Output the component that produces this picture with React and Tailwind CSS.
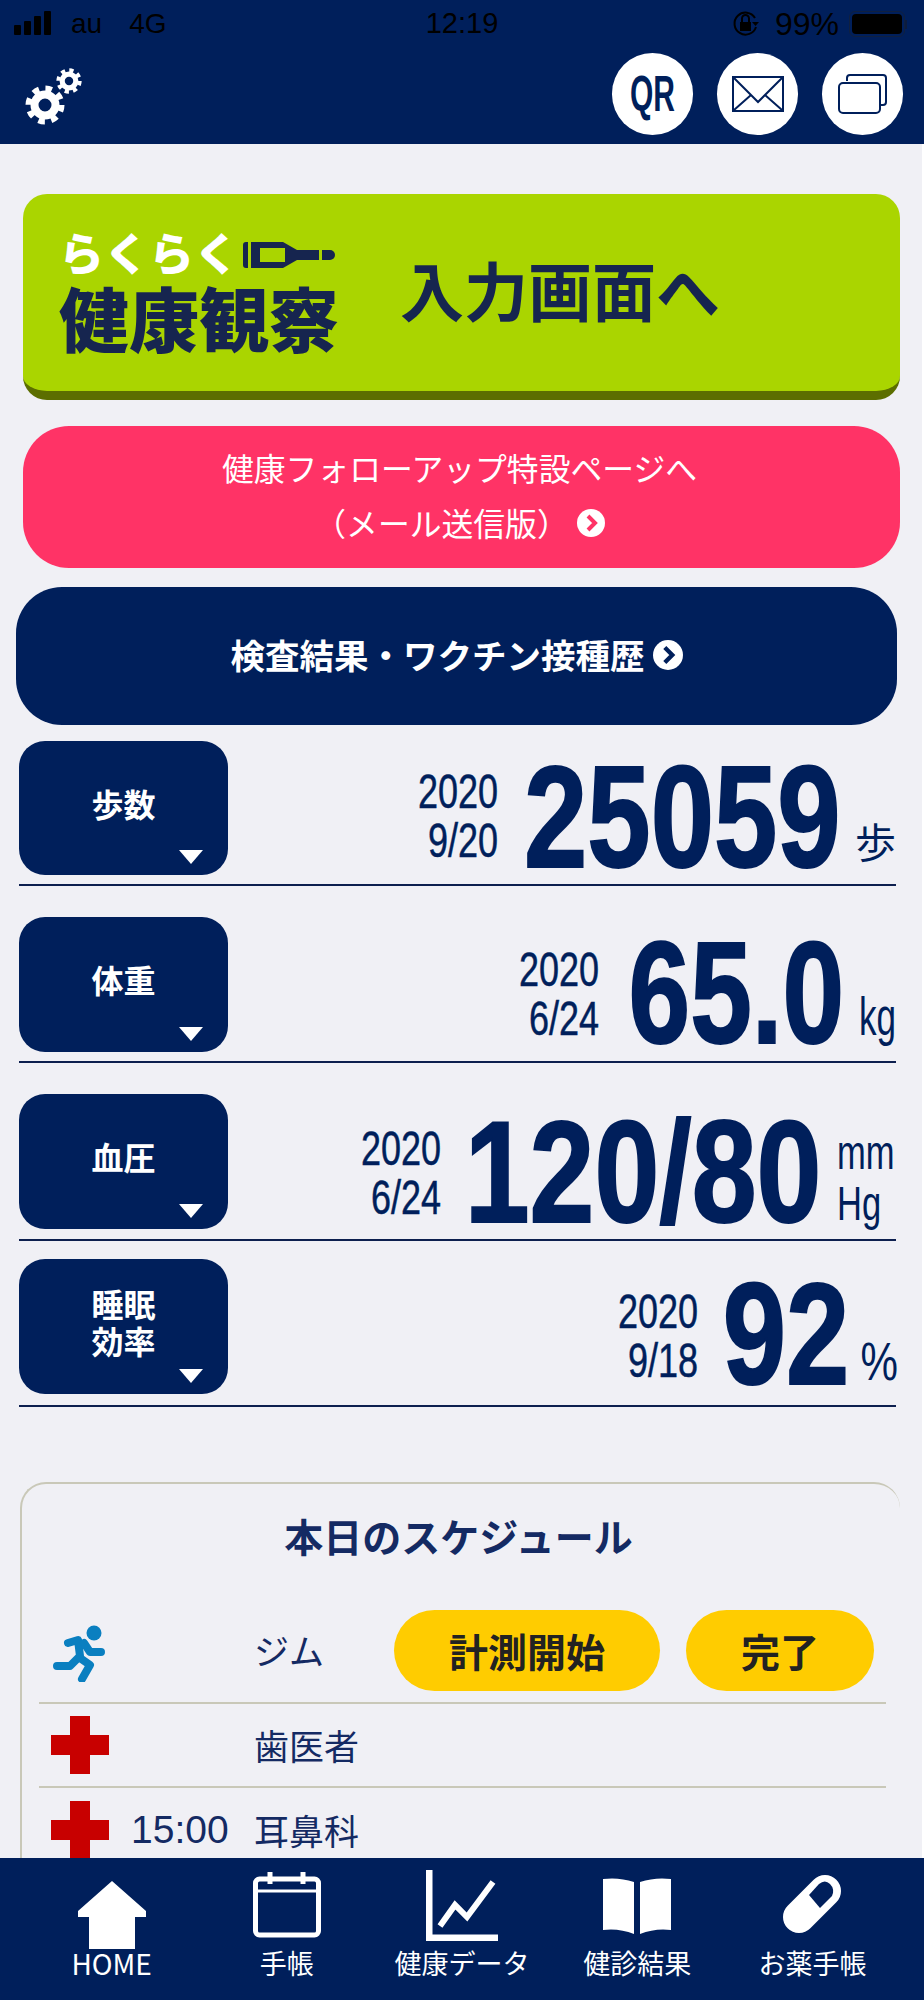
import React from "react";

const JP = "font-['Noto_Sans_CJK_JP','Noto_Sans',sans-serif]";
const NUM = "font-['Liberation_Sans',sans-serif]";

function Gear({ size, cls }) {
  return (
    <svg width={size} height={size} viewBox="0 0 40 40" className={cls}>
      <circle cx="20" cy="20" r="16.500" fill="none" stroke="#fff" strokeWidth="6" strokeDasharray="6.500 6.450" />
      <circle cx="20" cy="20" r="10.500" fill="none" stroke="#fff" strokeWidth="8" />
    </svg>
  );
}

function Label({ children, h }) {
  return (
    <div className={`relative w-[209px] ${h} shrink-0 rounded-[26px] bg-[#001f5b] flex items-center justify-center text-white text-[32px] leading-[37px] font-bold text-center pb-[10px] ${JP}`}>
      <div>{children}</div>
      <div className="absolute right-[25px] bottom-[11px] w-0 h-0 border-l-[12px] border-r-[12px] border-t-[14px] border-l-transparent border-r-transparent border-t-white" />
    </div>
  );
}

function DateBox({ d, w, mt }) {
  return (
    <div className={`${w} ${mt} shrink-0 text-right ${NUM} text-[48px] leading-[49px] text-[#001f5b] [-webkit-text-stroke:0.5px_#001f5b]`}>
      <div className="whitespace-nowrap origin-right scale-x-[0.75]">2020</div>
      <div className="whitespace-nowrap origin-right scale-x-[0.75]">{d}</div>
    </div>
  );
}

function Row({ label, date, dateMt, value, valW, scaleCls, unit, mt, pt, pb, h }) {
  return (
    <div className={`${mt} ${pb} ml-[19px] mr-[26px] flex items-start border-b-2 border-[#0d1f4f]`}>
      <Label h={h}>{label}</Label>
      <div className="flex-1" />
      <DateBox d={date} w="w-[120px]" mt={dateMt} />
      <div className={`${valW} ${pt} h-[134px] shrink-0 flex justify-end items-center overflow-visible`}>
        <div className={`${NUM} whitespace-nowrap text-[144px] leading-[134px] font-bold text-[#001f5b] origin-right [-webkit-text-stroke:2px_#001f5b] ${scaleCls}`}>{value}</div>
      </div>
      {unit}
    </div>
  );
}

function ScheduleRow({ icon, time, name, border = true }) {
  return (
    <div className={`h-[84px] flex items-center ${border ? "border-b-2 border-[#c9c8b8]" : ""}`}>
      <div className="w-[92px] shrink-0 flex justify-center pr-[10px]">{icon}</div>
      <div className={`w-[123px] shrink-0 text-[#142a63] text-[39px] leading-[44px] whitespace-nowrap ${NUM}`}>{time}</div>
      <div className={`w-[140px] shrink-0 text-[#142a63] text-[35px] ${JP}`}>{name}</div>
    </div>
  );
}

function Cross() {
  return (
    <svg width="58" height="58" viewBox="0 0 58 58">
      <path d="M19 0h20v19h19v20H39v19H19V39H0V19h19z" fill="#c80000" />
    </svg>
  );
}

function NavItem({ icon, label, cls = "text-[27px]" }) {
  return (
    <div className="flex flex-col items-center">
      <div className="h-[92px] w-full flex items-end justify-center">{icon}</div>
      <div className={`text-white leading-[30px] whitespace-nowrap mt-[-2px] ${JP} ${cls}`}>{label}</div>
    </div>
  );
}

export default function App() {
  return (
    <div className={`w-[924px] h-[2000px] overflow-hidden flex flex-col bg-white ${JP}`}>
      {/* header */}
      <div className="h-[144px] shrink-0 bg-[#001f5b] relative">
        <div className={`h-[48px] flex items-center px-[14px] text-black text-[28px] ${NUM} relative`}>
          <div className="flex items-end gap-[3px] h-[24px] mt-[-2px]">
            <div className="w-[7px] h-[10px] bg-black rounded-[1px]" />
            <div className="w-[7px] h-[14px] bg-black rounded-[1px]" />
            <div className="w-[7px] h-[19px] bg-black rounded-[1px]" />
            <div className="w-[7px] h-[24px] bg-black rounded-[1px]" />
          </div>
          <span className="ml-[20px]">au</span>
          <span className="ml-[27px]">4G</span>
          <span className="absolute left-0 right-0 text-center pointer-events-none text-[29px]">12:19</span>
          <div className="ml-auto flex items-center">
            <svg width="30" height="30" viewBox="0 0 30 30" fill="none" className="mr-[14px]">
              <path d="M24 9a11 11 0 1 0 1 9" stroke="#000" strokeWidth="2" />
              <path d="M21 13h7l-3.500 4z" fill="#000" />
              <rect x="9" y="13" width="11" height="9" fill="#000" />
              <path d="M11 13V9.500a3.500 3.500 0 0 1 7 0V13" stroke="#000" strokeWidth="2" />
            </svg>
            <span className="text-[32px]">99%</span>
            <div className="ml-[10px] w-[56px] h-[26px] rounded-[6px] border border-[#10203f] p-[2px]">
              <div className="w-full h-full rounded-[4px] bg-black" />
            </div>
            <div className="w-[2px] h-[9px] bg-[#0c1c3e] mr-[3px]" />
          </div>
        </div>
        <div className="flex items-start pr-[21px] mt-[5px]">
          <div className="relative w-[60px] h-[60px] ml-[25px] mt-[14px]">
            <Gear size={40} cls="absolute left-0 top-[18px]" />
            <Gear size={26} cls="absolute left-[31px] top-[1px]" />
          </div>
          <div className="ml-auto flex gap-[24px]">
            <div className="w-[81px] h-[82px] rounded-full bg-white flex items-center justify-center">
              <span className={`${NUM} font-bold text-[#001f5b] text-[50px] scale-x-[0.6]`}>QR</span>
            </div>
            <div className="w-[81px] h-[82px] rounded-full bg-white flex items-center justify-center">
              <svg width="52" height="36" viewBox="0 0 52 36" fill="none" stroke="#001f5b" strokeWidth="2">
                <rect x="1" y="1" width="50" height="34" />
                <path d="M2 2l24 24L50 2M2 34l17-15M50 34L33 19" />
              </svg>
            </div>
            <div className="w-[81px] h-[82px] rounded-full bg-white flex items-center justify-center">
              <svg width="50" height="40" viewBox="0 0 50 40" fill="none" stroke="#001f5b" strokeWidth="2">
                <path d="M9 7V4a3 3 0 0 1 3-3h33a3 3 0 0 1 3 3v24a3 3 0 0 1-3 3h-3" />
                <rect x="1" y="9" width="41" height="30" rx="4" />
              </svg>
            </div>
          </div>
        </div>
      </div>

      {/* content */}
      <div className="flex-1 min-h-0 overflow-hidden bg-[#f0f0f5] mr-[2px] pt-[50px]">
        <div className="ml-[23px] mr-[22px] h-[206px] rounded-[24px] bg-[#aad500] border-b-[9px] border-[#5c6e00] flex items-center">
          <div className="ml-[36px] w-[284px] mt-[-4px]">
            <div className="flex items-center h-[48px]">
              <span className="text-white text-[45px] leading-[48px] font-black whitespace-nowrap">らくらく</span>
              <svg width="92" height="26" viewBox="0 0 92 26" className="ml-[4px] mt-[6px] shrink-0">
                <path d="M3 0h2v26H3a3 3 0 0 1-3-3V3a3 3 0 0 1 3-3zM8 0h32l14 8h22v10H54l-14 8H8z" fill="#16254f" />
                <rect x="17" y="6" width="25" height="14" fill="#aad500" />
                <path d="M79 8h8a5 5 0 0 1 0 10h-8z" fill="#16254f" />
              </svg>
            </div>
            <div className="text-[#16254f] text-[70px] leading-[72px] font-black whitespace-nowrap mt-[5px]">健康観察</div>
          </div>
          <div className="ml-[57px] text-[#16254f] text-[64px] font-bold whitespace-nowrap mt-[-10px]">入力画面へ</div>
        </div>

        <div className="mt-[26px] ml-[23px] mr-[22px] h-[142px] rounded-[46px] bg-[#ff3366] text-white text-[31.800px] leading-[55px] flex flex-col items-center justify-center pb-[4px] pr-[4px]">
          <div>健康フォローアップ特設ページへ</div>
          <div className="flex items-center">
            （メール送信版）
            <svg width="28" height="28" viewBox="0 0 28 28" className="ml-[8px]">
              <circle cx="14" cy="14" r="14" fill="#fff" />
              <path d="M11 7l7 7-7 7" fill="none" stroke="#ff3366" strokeWidth="4" />
            </svg>
          </div>
        </div>

        <div className="mt-[19px] ml-[16px] mr-[25px] h-[138px] rounded-[46px] bg-[#001f5b] text-white text-[34.500px] font-bold flex items-center justify-center pb-[3px]">
          <span>検査結果・ワクチン接種歴</span>
          <svg width="30" height="30" viewBox="0 0 28 28" className="ml-[8px]">
            <circle cx="14" cy="14" r="14" fill="#fff" />
            <path d="M11 7l7 7-7 7" fill="none" stroke="#001f5b" strokeWidth="4" />
          </svg>
        </div>

        <Row mt="mt-[16px]" pb="pb-[9px]" h="h-[134px]" label="歩数" date="9/20" dateMt="mt-[26px]" pt="pt-[20px]" value="25059" valW="w-[342px]" scaleCls="scale-x-[0.79]"
          unit={<div className={`w-[56px] h-[134px] shrink-0 flex justify-end items-end text-[#001f5b] text-[41px] leading-[46px] pb-[12px] ${JP}`}>歩</div>} />
        <Row mt="mt-[31px]" pb="pb-[9px]" h="h-[135px]" label="体重" date="6/24" dateMt="mt-[28px]" pt="pt-[20px]" value="65.0" valW="w-[245px]" scaleCls="scale-x-[0.77]"
          unit={<div className={`w-[52px] h-[135px] shrink-0 flex justify-end items-end text-[#001f5b] text-[54px] leading-[56px] pb-[8px] ${NUM}`}><span className="inline-block origin-right scale-x-[0.65]">kg</span></div>} />
        <Row mt="mt-[31px]" pb="pb-[10px]" h="h-[135px]" label="血圧" date="6/24" dateMt="mt-[30px]" pt="pt-[24px]" value="120/80" valW="w-[380px]" scaleCls="scale-x-[0.81]"
          unit={<div className={`w-[75px] h-[135px] shrink-0 text-[#001f5b] text-[48px] leading-[51px] pt-[33px] pl-[16px] ${NUM}`}><div className="scale-x-[0.72] origin-left">mm</div><div className="scale-x-[0.72] origin-left">Hg</div></div>} />
        <Row mt="mt-[18px]" pb="pb-[11px]" h="h-[135px]" label={<>睡眠<br />効率</>} date="9/18" dateMt="mt-[28px]" pt="pt-[18px]" value="92" valW="w-[151px]" scaleCls="scale-x-[0.79]"
          unit={<div className={`w-[49px] h-[135px] shrink-0 flex justify-end items-end text-[#001f5b] text-[54px] leading-[50px] pb-[8px] mr-[-2px] ${NUM}`}><span className="inline-block origin-right scale-x-[0.78]">%</span></div>} />

        <div className="mt-[75px] ml-[20px] mr-[22px] h-[500px] rounded-t-[26px] border-t-2 border-l-2 border-[#c9c8b8] pl-[17px] pr-[14px]">
          <div className="text-center pr-[8px] text-[#142a63] text-[39px] font-bold pt-[24px] leading-[54px] h-[120px]">本日のスケジュール</div>
          <div className="h-[100px] pt-[6px] pb-[11px] flex items-center border-b-2 border-[#c9c8b8]">
            <div className="w-[92px] shrink-0 flex justify-center pr-[12px]">
              <svg width="54" height="58" viewBox="34 3 54 58" fill="none" stroke="#0a7fc0" strokeWidth="8" strokeLinecap="round" strokeLinejoin="round" className="mt-[4px]">
                <circle cx="76" cy="12" r="7.500" fill="#0a7fc0" stroke="none" />
                <path d="M50 22l10-3 2 16-10 10H39" />
                <path d="M66 22l6 9h11" />
                <path d="M62 37l10 7-8 14" />
              </svg>
            </div>
            <div className="w-[123px] shrink-0" />
            <div className="w-[140px] shrink-0 text-[#142a63] text-[35px]">ジム</div>
            <div className="w-[266px] h-[81px] shrink-0 rounded-full bg-[#ffcc00] text-[#222] text-[39px] font-bold flex items-center justify-center">計測開始</div>
            <div className="ml-[26px] w-[188px] h-[81px] shrink-0 rounded-full bg-[#ffcc00] text-[#222] text-[39px] font-bold flex items-center justify-center">完了</div>
          </div>
          <ScheduleRow icon={<Cross />} name="歯医者" />
          <ScheduleRow icon={<Cross />} time="15:00" name="耳鼻科" border={false} />
        </div>
      </div>

      {/* bottom nav */}
      <div className="h-[142px] shrink-0 bg-[#001f5b] px-[24px] grid grid-cols-5">
        <NavItem
          label="HOME"
          cls="font-['Liberation_Sans',sans-serif] text-[28px]"
          icon={
            <svg width="70" height="68" viewBox="0 0 70 68" className="mb-[1px]">
              <path d="M35 0l34 30v6H58v32H12V36H1v-6z" fill="#fff" />
            </svg>
          }
        />
        <NavItem
          label="手帳"
          icon={
            <svg width="68" height="66" viewBox="0 0 68 66" className="mb-[12px]" fill="none" stroke="#fff">
              <rect x="2.500" y="7" width="63" height="56" rx="4" strokeWidth="5" />
              <path d="M2 19h64" strokeWidth="3" />
              <path d="M17 0v12M50 0v12" strokeWidth="5" />
            </svg>
          }
        />
        <NavItem
          label="健康データ"
          icon={
            <svg width="72" height="71" viewBox="0 0 72 71" className="mb-[9px]" fill="none" stroke="#fff">
              <path d="M3 0v68h69" strokeWidth="7" />
              <path d="M14 56l15-21 12 12L67 12" strokeWidth="6" />
            </svg>
          }
        />
        <NavItem
          label="健診結果"
          icon={
            <svg width="68" height="57" viewBox="0 0 68 57" className="mb-[16px]">
              <path d="M0 2Q16 0 31 5V57Q16 51 0 53ZM68 2Q52 0 37 5V57Q52 51 68 53Z" fill="#fff" />
            </svg>
          }
        />
        <NavItem
          label="お薬手帳"
          icon={
            <svg width="58" height="58" viewBox="0 0 58 58" className="mb-[17px]">
              <path d="M16 42L42 16" stroke="#fff" strokeWidth="32" strokeLinecap="round" />
              <path d="M26 20L37 33L49 21Q52 14 47 9Q42 4 36 9Z" fill="#001f5b" />
            </svg>
          }
        />
      </div>
    </div>
  );
}
